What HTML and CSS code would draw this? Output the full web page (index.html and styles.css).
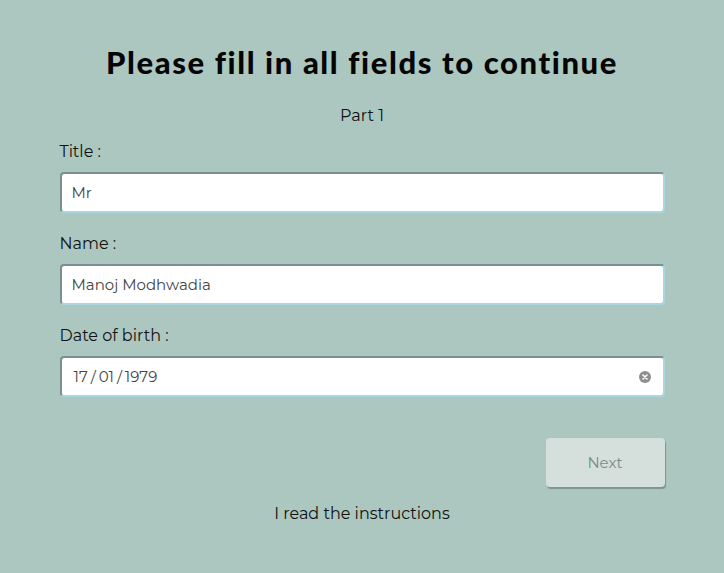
FILE: index.html
```html
<!DOCTYPE html>
<html>
<head>
<meta charset="utf-8">
<link rel="stylesheet" href="styles.css">
</head>
<body>
<div class="page">
  <h1 class="heading">Please fill in all fields to continue</h1>
  <p class="part">Part 1</p>
  <form class="form">
    <div class="field">
      <label class="label">Title :</label>
      <div class="input"><span class="value">Mr</span></div>
    </div>
    <div class="field">
      <label class="label">Name :</label>
      <div class="input"><span class="value">Manoj Modhwadia</span></div>
    </div>
    <div class="field">
      <label class="label">Date of birth :</label>
      <div class="input date"><span class="value dob">17 / 01 / 1979</span>
        <svg class="clear" width="12" height="12" viewBox="0 0 12 12"><circle cx="6" cy="6" r="6" fill="#8e8e8e"/><path d="M4 4 L8 8 M8 4 L4 8" stroke="#fff" stroke-width="1.6" stroke-linecap="round"/></svg>
      </div>
    </div>
    <div class="actions">
      <div class="btn">Next</div>
    </div>
  </form>
  <p class="instructions">I read the instructions</p>
</div>
</body>
</html>
```
FILE: styles.css
```css
html, body { margin: 0; padding: 0; }
body {
  background: #abc7bf;
  font-family: "Montserrat", "Noto Sans", "Open Sans", sans-serif;
  color: #111;
  width: 724px;
  height: 573px;
  overflow: hidden;
}
.page {
  width: 605px;
  margin: 0 auto;
  padding-top: 40px;
  display: flex;
  flex-direction: column;
}
.heading {
  margin: 0;
  text-align: center;
  font-family: "Lato", sans-serif;
  font-weight: 900;
  font-size: 31px;
  line-height: 44px;
  letter-spacing: 1.6px;
  color: #050505;
}
.part {
  margin: 22px 0 0;
  text-align: center;
  font-size: 16px;
  line-height: 20px;
}
.form { display: flex; flex-direction: column; margin-top: 16px; }
.field { display: flex; flex-direction: column; margin-bottom: 21px; }
.label { font-size: 16px; line-height: 20px; margin-bottom: 10px; }
.input {
  height: 37px;
  background: #fff;
  border: 2px solid;
  border-color: #7a9090 #aad6e0 #aad6e0 #7a9090;
  border-radius: 4px;
  display: flex;
  align-items: center;
  padding: 0 10px;
  font-size: 15px;
  color: #444;
}
.date { justify-content: space-between; padding-right: 12px; }
.dob { padding-left: 2px; word-spacing: -1px; }
.clear { display: block; }
.actions { display: flex; justify-content: flex-end; margin-top: 20px; }
.btn {
  width: 119px;
  height: 49px;
  background: #d5dfdc;
  border-radius: 4px;
  box-shadow: 1px 2px 1px rgba(80,100,95,0.5);
  display: flex;
  align-items: center;
  justify-content: center;
  color: #7b8b8b;
  font-size: 15px;
}
.instructions {
  margin: 17px 0 0;
  text-align: center;
  font-size: 16px;
  line-height: 20px;
}
```
